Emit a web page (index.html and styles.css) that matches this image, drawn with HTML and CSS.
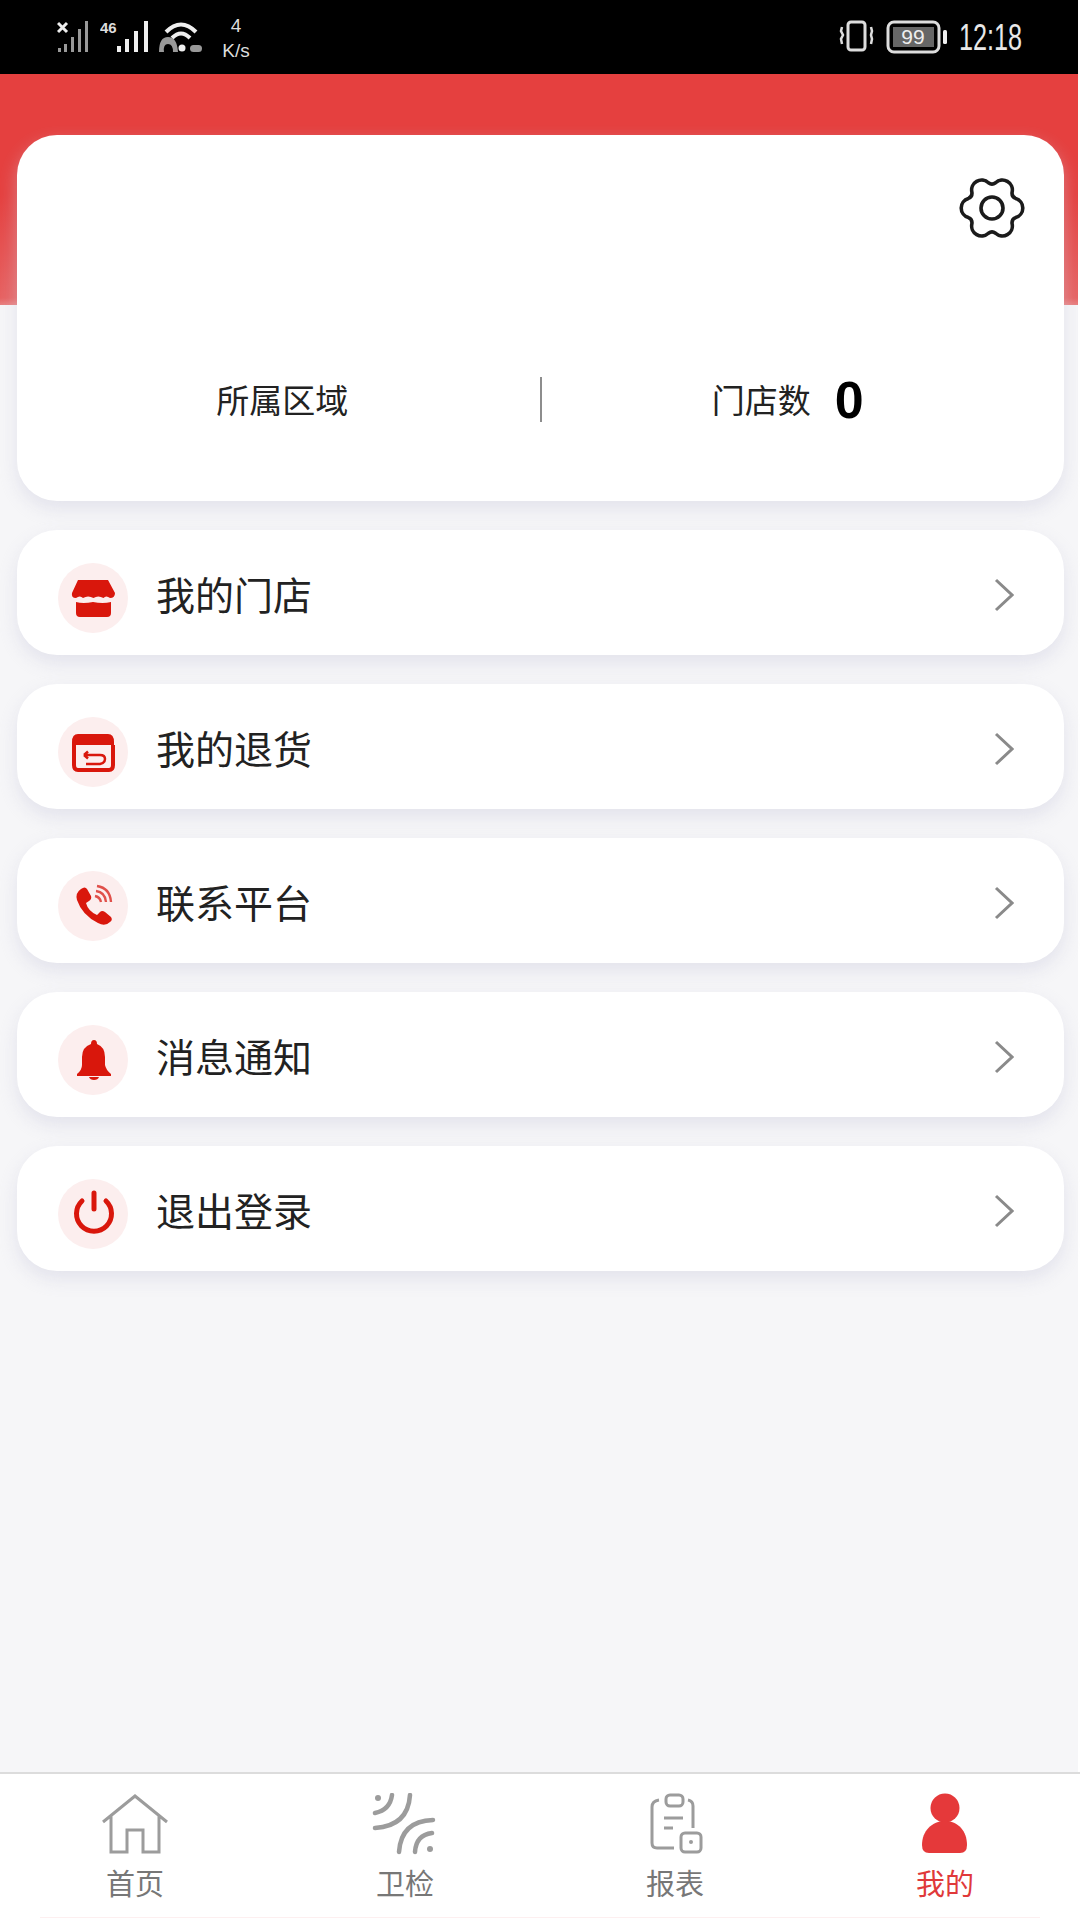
FILE: index.html
```html
<!DOCTYPE html>
<html lang="zh-CN">
<head>
<meta charset="utf-8">
<title>我的</title>
<link rel="stylesheet" href="styles.css">
</head>
<body>
<div class="page">
  <header class="status">
    <div class="status-left">
      <svg class="sig1" viewBox="0 0 34 32"><path d="M1 3l9 9M10 3l-9 9" class="st-w"/><g class="st-dim"><rect x="1" y="28" width="3" height="4"/><rect x="7" y="24" width="3" height="8"/><rect x="14" y="17" width="3" height="15"/><rect x="21" y="9" width="3" height="23"/><rect x="28" y="1" width="3" height="31"/></g></svg>
      <svg class="sig2" viewBox="0 0 50 32"><text x="0" y="13" class="st-46">46</text><g class="st-fill"><rect x="17" y="26" width="4" height="6"/><rect x="25" y="19" width="4" height="13"/><rect x="34" y="11" width="4" height="21"/><rect x="44" y="1" width="4" height="31"/></g></svg>
      <svg class="wifi" viewBox="0 0 45 32"><path d="M8 12Q23-3 38 12M14 18Q23 9 32 18" class="st-wide"/><path d="M1 32Q1 17 10 17T20 32H15Q15 24 10 24T6 32Z" class="st-dimfill"/><circle cx="24" cy="28" r="3.5" class="st-fill"/><rect x="32" y="25" width="12" height="7" rx="3.5" class="st-dimfill"/></svg>
      <div class="speed"><span>4</span><span>K/s</span></div>
    </div>
    <div class="status-right">
      <svg class="vib" viewBox="0 0 36 32"><rect x="9" y="2" width="17" height="28" rx="3" class="st-line"/><path d="M3 7l-1 4 2 4-2 4 1 5M32 7l1 4-1 4 1 4-1 5" class="st-thin"/></svg>
      <svg class="batt" viewBox="0 0 62 34"><rect x="2" y="2" width="51" height="30" rx="6" class="st-line"/><rect x="7" y="7" width="41" height="20" class="st-batfill"/><text x="27" y="24" class="st-99">99</text><rect x="57" y="10" width="4" height="14" rx="1.5" class="st-fill"/></svg>
      <span class="time">12:18</span>
    </div>
  </header>

  <main class="main">
    <section class="card">
      <div class="card-top">
        <svg class="gear" viewBox="0 0 70 70"><path d="M58.6 25.4Q54.5 23.75 55.1 19.3A10 10 0 0 0 38.55 9.75Q35 12.5 31.45 9.75A10 10 0 0 0 14.9 19.3Q15.5 23.75 11.4 25.4A10 10 0 0 0 11.4 44.6Q15.5 46.25 14.9 50.7A10 10 0 0 0 31.45 60.25Q35 57.5 38.55 60.25A10 10 0 0 0 55.1 50.7Q54.5 46.25 58.6 44.6A10 10 0 0 0 58.6 25.4Z"/><circle cx="35" cy="35" r="11"/></svg>
      </div>
      <div class="stats">
        <div class="stat stat-area">所属区域</div>
        <div class="divider"></div>
        <div class="stat stat-count"><span>门店数</span><b class="count">0</b></div>
      </div>
    </section>

    <nav class="menu">
      <a class="row">
        <span class="badge"><svg viewBox="0 0 70 70"><path class="ic" d="M20 17H50L57 30Q57 35 52 35 48 32 45.500 35 40 32 35.500 35 30 32 25 35 22 32 18 35 13 35 14 30Z"/><path class="ic" d="M18 39Q25 41 35 39 45 41 53 39V50Q53 54 49 54H22Q18 54 18 50Z"/></svg></span>
        <span class="label">我的门店</span>
        <svg class="chev" viewBox="0 0 20 34"><path d="M2 2L18 17 2 32"/></svg>
      </a>
      <a class="row">
        <span class="badge"><svg viewBox="0 0 70 70"><path class="ic" d="M20 17H50Q56 17 56 25V28H14V25Q14 17 20 17Z"/><path class="ic-line" d="M16 28V48Q16 53 20 53H51Q55 53 55 48V28"/><path class="ic-line2" d="M26 38H42Q47 38 47 42T42 47H28M26 38l4-3.500M26 38l4 3.500"/></svg></span>
        <span class="label">我的退货</span>
        <svg class="chev" viewBox="0 0 20 34"><path d="M2 2L18 17 2 32"/></svg>
      </a>
      <a class="row">
        <span class="badge"><svg viewBox="0 0 70 70"><path class="ic" d="M23 18Q27 15 29 18L33 25Q34 28 31 30L28 32Q30 40 39 44L42 41Q44 39 47 41L53 46Q55 49 52 51 47 56 40 52 24 44 19 29 17 22 23 18Z"/><path class="ic-wave" d="M37 25Q42 26 43 31M38 20Q47 21 48 31M39 15Q52 17 53 31"/></svg></span>
        <span class="label">联系平台</span>
        <svg class="chev" viewBox="0 0 20 34"><path d="M2 2L18 17 2 32"/></svg>
      </a>
      <a class="row">
        <span class="badge"><svg viewBox="0 0 70 70"><path class="ic" d="M36 15Q39 15 39 19 47 22 47 32V40Q48 45 53 49V51H19V49Q24 45 24 40V32Q24 22 33 19 33 15 36 15Z"/><path class="ic" d="M31 52H41Q40 55 36 55T31 52Z"/></svg></span>
        <span class="label">消息通知</span>
        <svg class="chev" viewBox="0 0 20 34"><path d="M2 2L18 17 2 32"/></svg>
      </a>
      <a class="row">
        <span class="badge"><svg viewBox="0 0 70 70"><path class="ic-power" d="M24 22A17.500 17.500 0 1 0 48 22M36 14V30"/></svg></span>
        <span class="label">退出登录</span>
        <svg class="chev" viewBox="0 0 20 34"><path d="M2 2L18 17 2 32"/></svg>
      </a>
    </nav>
  </main>

  <footer class="tabbar">
    <a class="tab">
      <svg viewBox="0 0 70 62"><path class="tab-line" d="M3 29L35 3 67 29M11 23V59H27V37H43V59H59V23"/></svg>
      <span>首页</span>
    </a>
    <a class="tab">
      <svg viewBox="0 0 70 62"><path class="tab-wave" d="M22 2Q20 17 5 20M40 2Q38 33 5 35M62 40Q46 42 45 59M63 27Q31 28 29 59"/><circle class="tab-dot" cx="8" cy="5" r="3"/><circle class="tab-dot" cx="60" cy="56" r="3"/></svg>
      <span>卫检</span>
    </a>
    <a class="tab">
      <svg viewBox="0 0 70 62"><path class="tab-line" d="M19 7Q12 8 12 14V50Q12 55 17 55H34M48 7Q53 8 53 13V35M24 25H43M24 35H33"/><rect class="tab-line" x="26" y="2" width="17" height="11" rx="4"/><rect class="tab-line" x="41" y="40" width="20" height="19" rx="4"/><circle class="tab-dot" cx="51" cy="49" r="2"/></svg>
      <span>报表</span>
    </a>
    <a class="tab tab-active">
      <svg viewBox="0 0 70 62"><circle class="tab-fill" cx="35" cy="15" r="14.500"/><path class="tab-fill" d="M12 52C12 38 22 28 35 28S57 38 57 52Q57 60 50 60H19Q12 60 12 52Z"/></svg>
      <span>我的</span>
    </a>
    <div class="tab-foot"></div>
  </footer>
</div>
</body>
</html>
```
FILE: styles.css
```css
* { box-sizing: border-box; }
html, body { margin: 0; padding: 0; background: #fff; }
body { width: 1080px; height: 1920px; overflow: hidden; font-family: "Noto Sans CJK SC", "Noto Sans", sans-serif; }
.page { width: 1078px; height: 1920px; display: flex; flex-direction: column; }

.status { height: 74px; flex: none; background: #000; color: #eee; display: flex; justify-content: space-between; align-items: flex-start; padding: 20px 56px 0 57px; }
.status svg { display: block; }
.status-left, .status-right { display: flex; align-items: flex-start; }
.sig1 { width: 34px; height: 32px; margin-right: 9px; }
.sig2 { width: 50px; height: 32px; margin-right: 8px; }
.wifi { width: 45px; height: 32px; margin-right: 16px; }
.speed { width: 34px; display: flex; flex-direction: column; align-items: center; margin-top: -5px; font: 19px/22px "Liberation Sans", sans-serif; color: #ddd; }
.speed span:last-child { margin-top: 3px; }
.st-w { stroke: #eee; stroke-width: 3; fill: none; }
.st-dim rect, .st-dimfill { fill: #999; }
.st-fill { fill: #f0f0f0; }
.st-46 { font: bold 15px "Liberation Sans Narrow", "Liberation Sans", sans-serif; fill: #ddd; }
.st-wide { stroke: #eee; stroke-width: 4; fill: none; }
.st-line { stroke: #ddd; stroke-width: 3; fill: none; }
.st-thin { stroke: #ddd; stroke-width: 2.500; fill: none; }
.st-batfill { fill: #666; }
.st-99 { font: 21px "Liberation Sans", sans-serif; fill: #eee; text-anchor: middle; }
.vib { width: 36px; height: 32px; margin-right: 11px; }
.batt { width: 62px; height: 34px; margin-right: 11px; }
.time { display: block; width: 63px; font: 36px/32px "Liberation Sans", sans-serif; color: #e8e8e8; transform: scaleX(.7); transform-origin: 0 50%; white-space: nowrap; margin-top: 2px; }

.main { flex: 1; padding: 61px 14px 0 17px; background: linear-gradient(#e5403f 0, #e5403f 120px, #e76262 224px, #e98080 231px, #f6f6f8 231px); }

.card { height: 366px; background: #fff; border-radius: 40px; box-shadow: 0 8px 18px rgba(205, 205, 222, .45); padding: 38px 37px 0 0; }
.card-top { display: flex; justify-content: flex-end; }
.gear { width: 70px; height: 70px; display: block; fill: none; stroke: #1b1b1b; stroke-width: 3.600; }
.stats { display: flex; align-items: center; height: 60px; margin: 126px -37px 0 0; color: #222; font-size: 33px; }
.stat { flex: none; width: 522.500px; display: flex; align-items: center; justify-content: center; }
.stat-area { padding-left: 8px; }
.stat-count { padding-right: 30px; gap: 24px; }
.divider { flex: none; width: 2px; height: 45px; background: #8d8d8d; }
.count { font: bold 52px/60px "Liberation Sans", sans-serif; color: #000; padding-top: 2px; }

.menu { display: flex; flex-direction: column; gap: 29px; margin-top: 29px; }
.row { height: 125px; background: #fff; border-radius: 40px; box-shadow: 0 8px 18px rgba(205, 205, 222, .45); display: flex; align-items: center; padding: 6px 50px 0 41px; }
.badge { width: 70px; height: 70px; border-radius: 50%; background: #fceeee; margin-top: 4px; flex: none; }
.badge svg { display: block; width: 70px; height: 70px; }
.label { flex: 1; margin: -6px 0 0 28px; font-size: 39px; line-height: 50px; color: #222; }
.chev { width: 20px; height: 34px; fill: none; stroke: #8a8a8a; stroke-width: 3; margin-top: -2px; }
.ic { fill: #d9170c; }
.ic-line { fill: none; stroke: #d9170c; stroke-width: 4; }
.ic-line2 { fill: none; stroke: #d9170c; stroke-width: 2.500; }
.ic-wave { fill: none; stroke: #e0504a; stroke-width: 2.400; }
.ic-power { fill: none; stroke: #d9170c; stroke-width: 5; stroke-linecap: round; }

.tabbar { flex: none; height: 148px; margin-right: -2px; border-top: 2px solid #dcdcdc; background: #fff; display: grid; grid-template-columns: repeat(4, 1fr); grid-template-rows: 143px 1px; padding-top: 19px; }
.tab { display: flex; flex-direction: column; align-items: center; color: #777; font-size: 29px; line-height: 30px; }
.tab svg { width: 70px; height: 62px; display: block; margin-bottom: 12px; }
.tab-active { color: #e0393a; }
.tab-line { fill: none; stroke: #9c9c9c; stroke-width: 3; }
.tab-wave { fill: none; stroke: #9c9c9c; stroke-width: 4.500; stroke-linecap: round; }
.tab-dot { fill: #9c9c9c; }
.tab-fill { fill: #e5393a; }
.tab-foot { grid-column: 1 / -1; margin: -19px 40px 0; height: 1px; background: #fdeff0; }
```
